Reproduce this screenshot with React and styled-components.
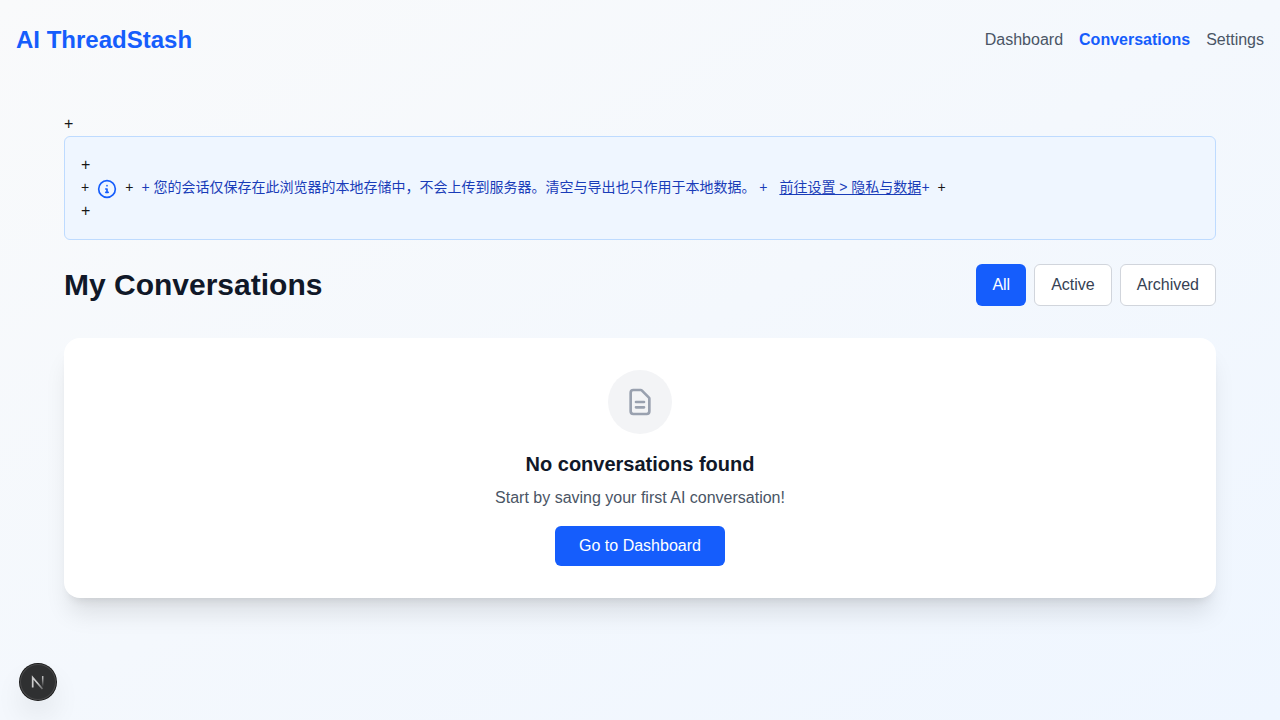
import React from "react";
import styled, { createGlobalStyle, css } from "styled-components";

const GlobalStyle = createGlobalStyle`
  *, *::before, *::after { box-sizing: border-box; }
  body {
    margin: 0;
    font-family: "Liberation Sans", "Noto Sans CJK SC", sans-serif;
    font-size: 16px;
    line-height: 24px;
    color: #171717;
  }
  h1, h2, p { margin: 0; }
`;

const Page = styled.div`
  min-height: 100vh;
  background: linear-gradient(to bottom right, #f9fafb, #eff6ff);
`;

const Header = styled.header`
  display: flex;
  align-items: center;
  justify-content: space-between;
  padding: 24px 16px;
`;

const Brand = styled.a`
  font-size: 24px;
  line-height: 32px;
  font-weight: 700;
  color: #155dfc;
  text-decoration: none;
`;

const Nav = styled.nav`
  display: flex;
  gap: 16px;
`;

const NavLink = styled.a`
  color: ${(p) => (p.$active ? "#155dfc" : "#4a5565")};
  font-weight: ${(p) => (p.$active ? 700 : 400)};
  text-decoration: none;
`;

const Main = styled.main`
  max-width: 1184px;
  margin: 0 auto;
  padding: 32px 16px;
`;

const Notice = styled.section`
  margin-bottom: 24px;
  padding: 16px;
  border: 1px solid #bedbff;
  border-radius: 6px;
  background: #eff6ff;
`;

const NoticeRow = styled.div`
  display: flex;
  align-items: flex-start;
  gap: 8px;
  font-size: 14px;
  line-height: 20px;
`;

const InfoIcon = styled.svg`
  flex: none;
  width: 20px;
  height: 20px;
  margin-top: 2px;
  color: #155dfc;
`;

const NoticeText = styled.p`
  color: #193cb8;
`;

const NoticeLink = styled.a`
  margin-left: 8px;
  color: inherit;
  text-decoration: underline;
  text-underline-offset: 2px;
`;

const TitleRow = styled.div`
  display: flex;
  align-items: center;
  justify-content: space-between;
  margin-bottom: 32px;
`;

const Title = styled.h1`
  font-size: 30px;
  line-height: 40px;
  font-weight: 700;
  color: #101828;
`;

const Filters = styled.div`
  display: flex;
  gap: 8px;
`;

const FilterButton = styled.button`
  padding: 8px 16px;
  border: 1px solid #d1d5dc;
  border-radius: 6px;
  background: #ffffff;
  color: #364153;
  font: inherit;
  cursor: pointer;
  ${(p) =>
    p.$active &&
    css`
      border: 0;
      background: #155dfc;
      color: #ffffff;
    `}
`;

const EmptyCard = styled.section`
  display: flex;
  flex-direction: column;
  align-items: center;
  padding: 32px;
  border-radius: 16px;
  background: #ffffff;
  box-shadow: 0 20px 25px -5px rgba(0, 0, 0, 0.1), 0 8px 10px -6px rgba(0, 0, 0, 0.1);
`;

const EmptyBadge = styled.div`
  display: flex;
  align-items: center;
  justify-content: center;
  width: 64px;
  height: 64px;
  margin-bottom: 16px;
  border-radius: 50%;
  background: #f3f4f6;
  color: #99a1af;
`;

const EmptyTitle = styled.h2`
  margin-bottom: 8px;
  font-size: 20px;
  line-height: 28px;
  font-weight: 700;
  color: #101828;
`;

const EmptyText = styled.p`
  margin-bottom: 16px;
  color: #4a5565;
`;

const PrimaryButton = styled.button`
  padding: 8px 24px;
  border: 0;
  border-radius: 6px;
  background: #155dfc;
  color: #ffffff;
  font: inherit;
  cursor: pointer;
`;

const DevBadge = styled.button`
  position: fixed;
  left: 20px;
  bottom: 20px;
  display: flex;
  align-items: center;
  justify-content: center;
  width: 36px;
  height: 36px;
  padding: 0;
  border: 0;
  border-radius: 50%;
  background: #2f3031;
  box-shadow: 0 0 0 1px #171717, inset 0 0 0 1px #484849, 0 16px 32px -8px rgba(0, 0, 0, 0.24);
`;

const filters = ["All", "Active", "Archived"];

export default function App() {
  const [filter, setFilter] = React.useState("All");
  return (
    <Page>
      <GlobalStyle />
      <Header>
        <Brand href="#home">AI ThreadStash</Brand>
        <Nav aria-label="Main">
          <NavLink href="#dashboard">Dashboard</NavLink>
          <NavLink href="#conversations" $active aria-current="page">Conversations</NavLink>
          <NavLink href="#settings">Settings</NavLink>
        </Nav>
      </Header>
      <Main>
        <div>+</div>
        <Notice>
          <div>+</div>
          <NoticeRow>
            <span>+</span>
            <InfoIcon viewBox="0 0 24 24" fill="none" stroke="currentColor" strokeWidth="2" strokeLinecap="round" strokeLinejoin="round" aria-hidden="true">
              <circle cx="12" cy="12" r="10" />
              <path d="M13.500 16h-3M12 16v-4h-1.500M12 8h.01" />
            </InfoIcon>
            <span>+</span>
            <NoticeText>
              + 您的会话仅保存在此浏览器的本地存储中，不会上传到服务器。清空与导出也只作用于本地数据。 +{" "}
              <NoticeLink href="#privacy">前往设置 &gt; 隐私与数据</NoticeLink>+
            </NoticeText>
            <span>+</span>
          </NoticeRow>
          <div>+</div>
        </Notice>
        <TitleRow>
          <Title>My Conversations</Title>
          <Filters role="group" aria-label="Filter conversations">
            {filters.map((name) => (
              <FilterButton key={name} type="button" $active={name === filter} aria-pressed={name === filter} onClick={() => setFilter(name)}>
                {name}
              </FilterButton>
            ))}
          </Filters>
        </TitleRow>
        <EmptyCard>
          <EmptyBadge>
            <svg width="32" height="32" viewBox="0 0 24 24" fill="none" stroke="currentColor" strokeWidth="2" strokeLinecap="round" strokeLinejoin="round" aria-hidden="true">
              <path d="M9 12h6m-6 4h6m2 5H7a2 2 0 01-2-2V5a2 2 0 012-2h5.586a1 1 0 01.707.293l5.414 5.414a1 1 0 01.293.707V19a2 2 0 01-2 2z" />
            </svg>
          </EmptyBadge>
          <EmptyTitle>No conversations found</EmptyTitle>
          <EmptyText>Start by saving your first AI conversation!</EmptyText>
          <PrimaryButton type="button">Go to Dashboard</PrimaryButton>
        </EmptyCard>
      </Main>
      <DevBadge type="button" aria-label="Open developer tools">
        <svg width="20" height="20" viewBox="0 0 20 20" fill="none" aria-hidden="true">
          <defs>
            <linearGradient id="stem" x1="0" y1="4" x2="0" y2="14" gradientUnits="userSpaceOnUse">
              <stop offset="0.2" stopColor="#fff" stopOpacity="0.65" />
              <stop offset="1" stopColor="#fff" stopOpacity="0.05" />
            </linearGradient>
            <linearGradient id="diagonal" x1="4" y1="4" x2="16" y2="17" gradientUnits="userSpaceOnUse">
              <stop offset="0.5" stopColor="#fff" stopOpacity="0.75" />
              <stop offset="1" stopColor="#fff" stopOpacity="0.2" />
            </linearGradient>
          </defs>
          <path d="M4.700 15.500V5.500L14.500 17" stroke="url(#diagonal)" strokeWidth="1.700" />
          <path d="M14.700 4v10.500" stroke="url(#stem)" strokeWidth="1.500" />
        </svg>
      </DevBadge>
    </Page>
  );
}
